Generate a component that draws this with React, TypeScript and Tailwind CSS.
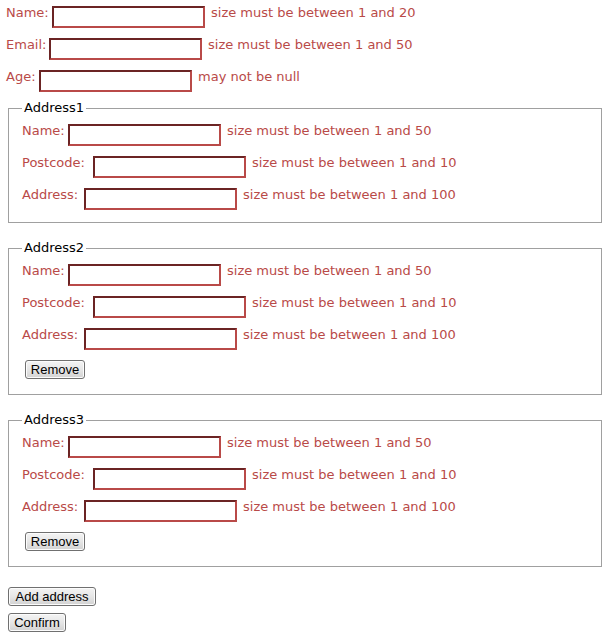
import React from 'react';

type FieldProps = {
  label: string;
  labelClass: string;
  error: string;
};

// one label / input / error line, 32px tall
const Field: React.FC<FieldProps> = ({ label, labelClass, error }) => (
  <div className="flex h-8 items-start">
    <label className={labelClass}>{label}</label>
    <input
      type="text"
      className="mt-[6px] h-[22px] w-[153px] border-2 border-t-[#6b2424] border-l-[#6b2424] border-r-[#b94a48] border-b-[#b94a48] bg-white outline-none"
    />
    <span className="ml-[6px] mt-[5px] leading-4 whitespace-nowrap">{error}</span>
  </div>
);

const btn =
  'h-[19px] rounded-[3px] border border-[#707070] bg-gradient-to-b from-[#f4f4f4] via-[#e6e6e6] to-[#d2d2d2] text-black text-[13px] leading-none font-["Liberation_Sans",Arial,sans-serif] shadow-[inset_0_0_0_1px_#fcfcfc]';

type AddressProps = {
  title: string;
  removable: boolean;
  className: string;
};

const AddressBlock: React.FC<AddressProps> = ({ title, removable, className }) => (
  <fieldset className={className}>
    <legend className="px-[2px] leading-4 text-black">{title}</legend>
    <Field label="Name:" labelClass="mt-[5px] w-[46px] leading-4" error="size must be between 1 and 50" />
    <Field label="Postcode:" labelClass="mt-[5px] w-[71px] leading-4" error="size must be between 1 and 10" />
    <Field label="Address:" labelClass="mt-[5px] w-[62px] leading-4" error="size must be between 1 and 100" />
    {removable && (
      <div className="h-8 pt-[6px]">
        <button type="button" className={`${btn} ml-[3px] w-[60px]`}>
          Remove
        </button>
      </div>
    )}
  </fieldset>
);

const App: React.FC = () => {
  return (
    <div className="min-h-[638px] bg-white text-[13px] text-[#b94a48] font-['DejaVu_Sans',sans-serif]">
      <div className="pl-[6px]">
        <Field label="Name:" labelClass="mt-[5px] w-[46px] leading-4" error="size must be between 1 and 20" />
        <Field label="Email:" labelClass="mt-[5px] w-[43px] leading-4" error="size must be between 1 and 50" />
        <Field label="Age:" labelClass="mt-[5px] w-[33px] leading-4" error="may not be null" />
      </div>

      <AddressBlock
        title="Address1"
        removable={false}
        className="ml-2 mt-1 w-[594px] border border-[#a0a0a0] pl-[13px] pr-3 pt-[2px] pb-2"
      />
      <AddressBlock
        title="Address2"
        removable={true}
        className="ml-2 mt-[17px] w-[594px] border border-[#a0a0a0] pl-[13px] pr-3 pt-[2px] pb-2"
      />
      <AddressBlock
        title="Address3"
        removable={true}
        className="ml-2 mt-[17px] w-[594px] border border-[#a0a0a0] pl-[13px] pr-3 pt-[2px] pb-2"
      />

      <div className="ml-2 mt-5 flex flex-col items-start gap-[7px]">
        <button type="button" className={`${btn} w-[88px]`}>
          Add address
        </button>
        <button type="button" className={`${btn} w-[58px]`}>
          Confirm
        </button>
      </div>
    </div>
  );
};

export default App;
